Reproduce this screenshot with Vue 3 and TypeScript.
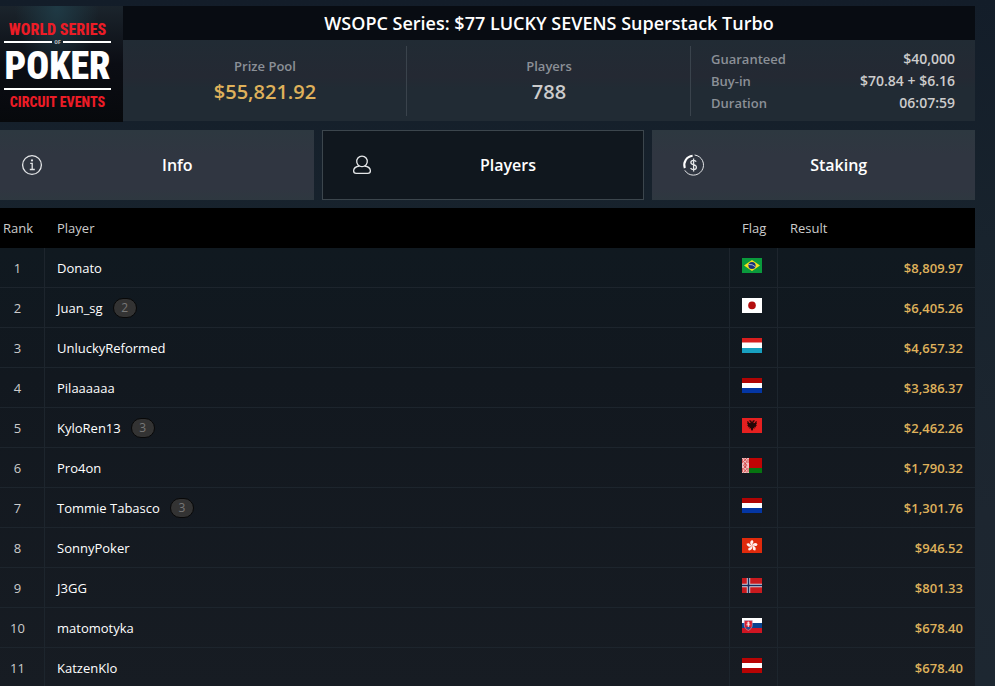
<script setup lang="ts">
import { ref } from 'vue'

type TabId = 'info' | 'players' | 'staking'
type Country = 'br' | 'jp' | 'lu' | 'nl' | 'al' | 'by' | 'hk' | 'no' | 'sk' | 'at'

interface PlayerRow {
  rank: number
  name: string
  entries?: number
  country: Country
  result: string
}

const tabs: { id: TabId; label: string }[] = [
  { id: 'info', label: 'Info' },
  { id: 'players', label: 'Players' },
  { id: 'staking', label: 'Staking' },
]
const activeTab = ref<TabId>('players')

const details = [
  { label: 'Guaranteed', value: '$40,000' },
  { label: 'Buy-in', value: '$70.84 + $6.16' },
  { label: 'Duration', value: '06:07:59' },
]

const players: PlayerRow[] = [
  { rank: 1, name: 'Donato', country: 'br', result: '$8,809.97' },
  { rank: 2, name: 'Juan_sg', entries: 2, country: 'jp', result: '$6,405.26' },
  { rank: 3, name: 'UnluckyReformed', country: 'lu', result: '$4,657.32' },
  { rank: 4, name: 'Pilaaaaaa', country: 'nl', result: '$3,386.37' },
  { rank: 5, name: 'KyloRen13', entries: 3, country: 'al', result: '$2,462.26' },
  { rank: 6, name: 'Pro4on', country: 'by', result: '$1,790.32' },
  { rank: 7, name: 'Tommie Tabasco', entries: 3, country: 'nl', result: '$1,301.76' },
  { rank: 8, name: 'SonnyPoker', country: 'hk', result: '$946.52' },
  { rank: 9, name: 'J3GG', country: 'no', result: '$801.33' },
  { rank: 10, name: 'matomotyka', country: 'sk', result: '$678.40' },
  { rank: 11, name: 'KatzenKlo', country: 'at', result: '$678.40' },
]

const petals = [0, 72, 144, 216, 288]
</script>

<template>
  <div class="page">
    <main class="lobby">
      <header class="summary">
        <div class="logo">
          <span class="logo-red logo-top">WORLD SERIES</span>
          <span class="logo-of">OF</span>
          <span class="logo-poker">POKER</span>
          <span class="logo-red logo-bottom">CIRCUIT EVENTS</span>
        </div>
        <div class="summary-main">
          <h1>WSOPC Series: $77 LUCKY SEVENS Superstack Turbo</h1>
          <div class="stats">
            <div class="stat">
              <span class="stat-label">Prize Pool</span>
              <span class="stat-value gold">$55,821.92</span>
            </div>
            <div class="stat">
              <span class="stat-label">Players</span>
              <span class="stat-value">788</span>
            </div>
            <dl class="details">
              <div v-for="d in details" :key="d.label">
                <dt>{{ d.label }}</dt>
                <dd>{{ d.value }}</dd>
              </div>
            </dl>
          </div>
        </div>
      </header>

      <nav class="tabs">
        <button
          v-for="tab in tabs"
          :key="tab.id"
          type="button"
          :class="['tab', { active: activeTab === tab.id }]"
          @click="activeTab = tab.id"
        >
          <svg v-if="tab.id === 'info'" class="tab-icon" viewBox="0 0 22 22" aria-hidden="true">
            <circle cx="11" cy="11" r="9.4" />
            <path d="M9.2 9.3h2v6.1M8.8 15.5h5" />
            <circle class="solid" cx="11" cy="6.4" r="1.1" />
          </svg>
          <svg v-else-if="tab.id === 'players'" class="tab-icon" viewBox="0 0 22 22" aria-hidden="true">
            <path d="M7.5 12A5.3 5.3 0 1 1 12.5 12C16.6 12.6 18.4 14.4 18.4 16.8C18.4 18.6 17.6 19.4 15.8 19.4H4.2C2.4 19.4 1.6 18.6 1.6 16.8C1.6 14.4 3.4 12.6 7.5 12ZM7.5 12Q10 13.4 12.5 12" />
          </svg>
          <svg v-else class="tab-icon" viewBox="0 0 22 22" aria-hidden="true">
            <path class="thin" d="M12.6 1A10.1 10.1 0 1 1 2.8 16.3" />
            <path class="thick" d="M10.6 1.8A9.3 9.3 0 0 0 2.8 14.2" />
            <path d="M14.2 7.6C13.6 6.6 12.6 6.3 11.6 6.3C10 6.3 8.9 7.1 8.9 8.4C8.9 9.8 10.1 10.3 11.6 10.7C13.3 11.2 14.4 11.8 14.4 13.3C14.4 14.7 13.2 15.6 11.6 15.6C10.3 15.6 9.2 15.1 8.6 14.1M11.6 4.4V17.4" />
          </svg>
          <span class="tab-label">{{ tab.label }}</span>
        </button>
      </nav>

      <table class="players">
        <thead>
          <tr>
            <th class="col-rank" scope="col">Rank</th>
            <th scope="col">Player</th>
            <th class="col-flag" scope="col">Flag</th>
            <th class="col-result" scope="col">Result</th>
          </tr>
        </thead>
        <tbody>
          <tr v-for="p in players" :key="p.rank">
            <td class="rank">{{ p.rank }}</td>
            <td class="name">
              <div class="name-line">
                <span>{{ p.name }}</span>
                <span v-if="p.entries" class="entries">{{ p.entries }}</span>
              </div>
            </td>
            <td class="flag-cell">
              <svg class="flag" viewBox="0 0 20 15" aria-hidden="true">
                <g v-if="p.country === 'br'">
                  <rect width="20" height="15" fill="#0a9a3c" />
                  <path d="M10 2L18 7.5L10 13L2 7.5Z" fill="#f6e01c" />
                  <circle cx="10" cy="7.5" r="3.6" fill="#16307c" />
                  <path d="M6.6 6.5Q10.4 6 13.3 8.7" fill="none" stroke="#c9d6e6" stroke-width=".8" />
                </g>
                <g v-else-if="p.country === 'jp'">
                  <rect width="20" height="15" fill="#fff" />
                  <circle cx="10" cy="7.4" r="3.8" fill="#b30d0d" />
                </g>
                <g v-else-if="p.country === 'lu'">
                  <rect width="20" height="15" fill="#fff" />
                  <rect width="20" height="4.5" fill="#d81e1e" />
                  <rect y="10" width="20" height="5" fill="#18a0c0" />
                </g>
                <g v-else-if="p.country === 'nl'">
                  <rect width="20" height="15" fill="#fff" />
                  <rect width="20" height="5" fill="#b00404" />
                  <rect y="10" width="20" height="5" fill="#0436a4" />
                </g>
                <g v-else-if="p.country === 'al'">
                  <rect width="20" height="15" fill="#e62020" />
                  <path d="M10 4.6L9.2 2.4L7.2 2.2L7.6 3.4L8.6 4L8.2 5.2L7 4.8L6.4 3.4L5 3.2L5.6 5L5 5.6L6 6.6L5 7.6L6.4 8L5.8 9.4L7.6 8.8L7.4 10.8L8.8 10L9 11.6L10 13L11 11.6L11.2 10L12.6 10.8L12.4 8.8L14.2 9.4L13.6 8L15 7.6L14 6.6L15 5.6L14.4 5L15 3.2L13.6 3.4L13 4.8L11.8 5.2L11.4 4L12.4 3.4L12.8 2.2L10.8 2.4Z" fill="#220606" />
                </g>
                <g v-else-if="p.country === 'by'">
                  <rect width="20" height="15" fill="#c00404" />
                  <rect y="10" width="20" height="5" fill="#067410" />
                  <rect width="7" height="15" fill="#efc0c0" />
                  <path d="M1.4 0L5 3.6L1.4 7.2L5 10.8L1.4 14.6M5 0L1.4 3.6L5 7.2L1.4 10.8L5 14.6M3.2 5V10M.4 1V5M6 1V5M.4 10V14M6 10V14" fill="none" stroke="#cf3a3a" stroke-width=".8" />
                </g>
                <g v-else-if="p.country === 'hk'">
                  <rect width="20" height="15" fill="#e02a0c" />
                  <path
                    v-for="angle in petals"
                    :key="angle"
                    :transform="`rotate(${angle} 10 7.8)`"
                    d="M10 7.8C7.4 6.2 7.8 3 10.2 2C11.8 3.1 11.8 4.7 10.6 5.4Z"
                    fill="#fff0ed"
                  />
                </g>
                <g v-else-if="p.country === 'no'">
                  <rect width="20" height="15" fill="#c91a1e" />
                  <path d="M6.5 0V15M0 7.5H20" stroke="#d9d3dc" stroke-width="3.4" />
                  <path d="M6.5 0V15M0 7.5H20" stroke="#172b5c" stroke-width="1.5" />
                </g>
                <g v-else-if="p.country === 'sk'">
                  <rect width="20" height="15" fill="#fff" />
                  <rect y="5" width="20" height="5" fill="#07428f" />
                  <rect y="10" width="20" height="5" fill="#cf1522" />
                  <path d="M2.3 2.6H10.3V7C10.3 9.8 8.6 11.3 6.3 12.4C4 11.3 2.3 9.8 2.3 7Z" fill="#da1a2b" stroke="#a9b4d0" stroke-width=".6" />
                  <path d="M3.6 9.6Q6.3 7.8 9 9.6Q8 11 6.3 11.8Q4.6 11 3.6 9.6Z" fill="#1f519d" />
                  <path d="M6.3 3.5V9M4.8 5H7.8M4.4 6.8H8.2" stroke="#fff" stroke-width=".9" />
                </g>
                <g v-else>
                  <rect width="20" height="15" fill="#fff" />
                  <rect width="20" height="5" fill="#b80404" />
                  <rect y="10" width="20" height="5" fill="#b80404" />
                </g>
              </svg>
            </td>
            <td class="result">{{ p.result }}</td>
          </tr>
        </tbody>
      </table>
    </main>
  </div>
</template>

<style>
body {
  margin: 0;
  background: #141e29;
}
</style>

<style scoped>
.page {
  box-sizing: border-box;
  height: 100vh;
  overflow: hidden auto;
  scrollbar-width: none;
  padding: 6px 20px 0 0;
  background: linear-gradient(#131d29 0%, #18232d 35%, #1d2630 75%, #1d2731 100%);
  color: #fff;
  font-family: 'Open Sans', 'Noto Sans', sans-serif;
  font-size: 13px;
}
.lobby {
  margin-left: -9px;
}

.summary {
  display: flex;
  margin-bottom: 8px;
}
.logo {
  box-sizing: border-box;
  display: flex;
  flex-direction: column;
  align-items: center;
  flex: none;
  width: 132px;
  height: 116px;
  padding: 15px 0 0 1px;
  background:
    radial-gradient(ellipse at 50% 0, #1f3a45 0, transparent 45%),
    linear-gradient(#1b242c, #0b0d14 50%, #07090c);
  font-family: 'Roboto Condensed', 'Liberation Sans Narrow', 'DejaVu Sans Condensed', sans-serif;
  font-weight: 800;
  white-space: nowrap;
}
.logo-red {
  color: #ec1c26;
  line-height: 17px;
}
.logo-top {
  font-size: 16px;
}
.logo-of {
  display: flex;
  align-items: center;
  gap: 2px;
  width: 107px;
  color: #b5b8bc;
  font-size: 6px;
  line-height: 7px;
}
.logo-of::before,
.logo-of::after {
  content: '';
  flex: 1;
  height: 2px;
  background: #fff;
}
.logo-poker {
  width: 107px;
  border-bottom: 2px solid #fff;
  font-size: 38px;
  font-weight: 900;
  line-height: 43px;
  text-align: center;
}
.logo-bottom {
  margin-top: 4px;
  font-size: 14px;
}

.summary-main {
  flex: 1;
  display: flex;
  flex-direction: column;
  height: 115px;
}
h1 {
  margin: 0;
  background: #080c12;
  font-size: 18px;
  font-weight: 600;
  line-height: 34px;
  text-align: center;
}
.stats {
  flex: 1;
  display: grid;
  grid-template-columns: repeat(3, 1fr);
  padding: 6px 0 5px;
  background: linear-gradient(#212b34, #242933 45%, #212b34 60%, #212b34);
  font-weight: 600;
}
.stat {
  display: flex;
  flex-direction: column;
  align-items: center;
  padding: 10px 0 0 1px;
  border-right: 1px solid #3a434c;
}
.stat-label,
dt {
  color: #8b9097;
}
.stat-label {
  line-height: 20px;
}
.stat-value {
  color: #ccc;
  font-size: 20px;
  line-height: 32px;
}
.stat-value.gold {
  color: #dfb15b;
}
.details {
  margin: 0;
  padding: 2px 20px 0;
  line-height: 22px;
}
.details div {
  display: flex;
  justify-content: space-between;
}
dd {
  margin: 0;
  color: #ccc;
  font-size: 14px;
}

.tabs {
  display: grid;
  grid-template-columns: repeat(3, 1fr);
  gap: 8px;
  margin-bottom: 8px;
}
.tab {
  display: flex;
  align-items: center;
  height: 70px;
  padding: 0 1px 0 29px;
  border: 1px solid transparent;
  background: linear-gradient(#2d3840, #303641 35%, #303641 85%, #2e3840) border-box;
  color: #fff;
  font: 600 16px 'Open Sans', 'Noto Sans', sans-serif;
  cursor: pointer;
}
.tab.active {
  border-color: #3c464d;
  background: #10171e;
}
.tab-icon {
  flex: none;
  width: 22px;
  height: 22px;
  fill: none;
  stroke: #e4e6e8;
  stroke-width: 1.3;
}
.tab-icon .solid {
  fill: #e4e6e8;
  stroke: none;
}
.tab-icon .thin {
  stroke-width: 1;
}
.tab-icon .thick {
  stroke: #fff;
  stroke-width: 2;
}
.tab-label {
  flex: 1;
}

.players {
  width: 100%;
  border-spacing: 0;
  table-layout: fixed;
}
th,
td {
  box-sizing: border-box;
  height: 40px;
  padding: 0 12px;
  text-align: left;
}
th {
  background: #000;
  color: #ccc;
  font-weight: 400;
}
.col-rank {
  width: 54px;
}
.col-flag {
  width: 48px;
}
.col-result {
  width: 197px;
}
tbody {
  background: linear-gradient(#101920, #12181f 30%, #171c23);
}
td {
  border-bottom: 1px solid #1d252d;
}
td:not(:last-child) {
  border-right: 1px solid #1d252d;
}
.rank {
  padding: 0;
  color: #ccc;
  text-align: center;
}
.name-line {
  display: flex;
  align-items: center;
  gap: 10px;
}
.entries {
  box-sizing: border-box;
  width: 24px;
  height: 20px;
  border: 1px solid #080808;
  border-radius: 10px;
  background: #333;
  color: #777;
  font-size: 12px;
  line-height: 18px;
  text-align: center;
}
.flag-cell {
  padding-bottom: 4px;
}
.flag {
  display: block;
  width: 20px;
  height: 15px;
}
.result {
  color: #dfb15b;
  font-weight: 600;
  text-align: right;
}
</style>
